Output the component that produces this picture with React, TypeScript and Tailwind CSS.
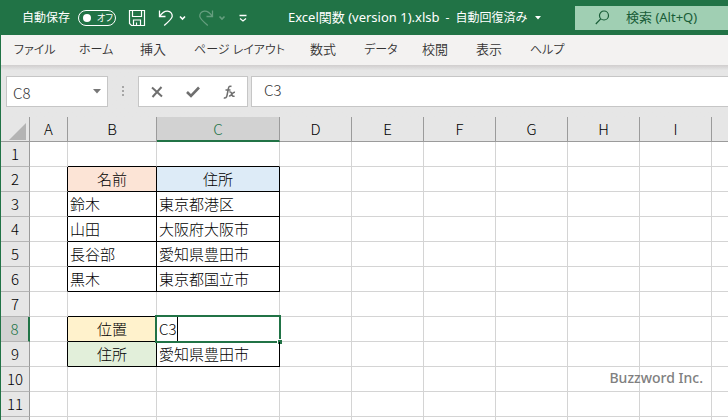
import React from "react";

const columns = ["A", "B", "C", "D", "E", "F", "G", "H", "I", ""];

const menus = [
  { label: "ファイル", style: "w-[65px] text-xs" },
  { label: "ホーム", style: "w-[61px] text-xs" },
  { label: "挿入", style: "w-[54px] text-[13px]" },
  { label: "ページ レイアウト", style: "w-[116px] text-xs" },
  { label: "数式", style: "w-[54px] text-[13px]" },
  { label: "データ", style: "w-[58px] text-xs" },
  { label: "校閲", style: "w-[54px] text-[13px]" },
  { label: "表示", style: "w-[54px] text-[13px]" },
  { label: "ヘルプ", style: "w-[54px] text-xs" },
];

type Row = { b?: string; c?: string; center?: boolean; bBg?: string; cBg?: string };

const rows: Row[] = [
  {},
  { b: "名前", c: "住所", center: true, bBg: "bg-[#fce4d6]", cBg: "bg-[#ddebf7]" },
  { b: "鈴木", c: "東京都港区" },
  { b: "山田", c: "大阪府大阪市" },
  { b: "長谷部", c: "愛知県豊田市" },
  { b: "黒木", c: "東京都国立市" },
  {},
  { b: "位置", c: "C3", bBg: "bg-[#fff2cc]" },
  { b: "住所", c: "愛知県豊田市", bBg: "bg-[#e2efda]" },
  {},
  {},
];

const ACTIVE_ROW = 7;

function TitleBar() {
  return (
    <header className="flex h-[35px] items-center bg-[#217346] pl-[21px] text-xs text-white">
      <label htmlFor="autosave" className="whitespace-nowrap">
        自動保存
      </label>
      <button
        id="autosave"
        role="switch"
        aria-checked="false"
        className="ml-2 flex h-4 w-[38px] shrink-0 items-center gap-1.5 rounded-full border border-white pl-1 text-[9px] leading-none whitespace-nowrap [font-feature-settings:'palt']"
      >
        <span className="size-2 shrink-0 rounded-full bg-white" />
        オフ
      </button>
      <button aria-label="上書き保存" className="ml-3 shrink-0">
        <svg width="18" height="18" viewBox="0 0 18 18" fill="none" stroke="white" strokeWidth="1.2">
          <path d="M1.500 1.500h15v15h-13l-2-2zM4.500 1.500v6h9v-6M5.500 16.500v-5.500h7v5.500M8.500 16v-2.500" />
        </svg>
      </button>
      <button aria-label="元に戻す" className="ml-3 shrink-0">
        <svg width="28" height="18" viewBox="0 0 28 18" fill="none" stroke="white" strokeWidth="1.3">
          <path d="M1.500 1.500v6h6M1.800 7.200C4 4 6.500 2 9.500 2.200c3.200.2 5 2.500 4.700 5.300-.2 2.200-2 3.800-8 9" />
          <path d="M22 7.500l2.500 2.500 2.500-2.500" strokeWidth="1.6" />
        </svg>
      </button>
      <button aria-label="やり直し" disabled className="ml-3 shrink-0 opacity-30">
        <svg width="28" height="18" viewBox="0 0 28 18" fill="none" stroke="white" strokeWidth="1.3">
          <path d="M14.500 1.500v6h-6M14.200 7.200C12 4 9.500 2 6.500 2.200c-3.200.2-5 2.500-4.700 5.300.2 2.200 2 3.800 8 9" />
          <path d="M21.500 7.500l2.500 2.500 2.500-2.500" strokeWidth="1.6" />
        </svg>
      </button>
      <button aria-label="クイック アクセスのユーザー設定" className="ml-3 shrink-0">
        <svg width="10" height="10" viewBox="0 0 10 10" fill="none" stroke="white" strokeWidth="1.3">
          <path d="M1.500 2.500h7M2 5.500l3 2.500 3-2.500" />
        </svg>
      </button>
      <h1 className="ml-10 flex items-baseline gap-1.5 whitespace-nowrap">
        <span className="text-[13px]">Excel関数 (version 1).xlsb</span>
        <span>-</span>
        <button className="flex items-center gap-2">
          自動回復済み
          <svg width="6" height="4" viewBox="0 0 6 4" fill="white">
            <path d="M0 0h6L3 3.500z" />
          </svg>
        </button>
      </h1>
      <label className="ml-auto flex h-6 w-[153px] shrink-0 items-center bg-[#a0cfb3] pl-5 text-[#185c37]">
        <svg width="15" height="15" viewBox="0 0 15 15" fill="none" stroke="currentColor" strokeWidth="1.200">
          <circle cx="9" cy="5.500" r="4.500" />
          <path d="M5.700 8.800L.8 14" />
        </svg>
        <input
          aria-label="検索"
          placeholder="検索 (Alt+Q)"
          className="ml-4 w-24 bg-transparent text-[13px] outline-none placeholder:text-[#185c37]"
        />
      </label>
    </header>
  );
}

function FormulaBar() {
  return (
    <div className="flex h-[52px] items-start bg-[#e6e6e6] bg-linear-to-b from-[#d0cece] to-[#e6e6e6] to-10% pt-[11px] pl-[5px] text-[15px] font-light text-[#333]">
      <div className="flex h-[31px] w-[102px] shrink-0 items-center border border-[#c6c6c6] bg-white px-1.5">
        <input aria-label="名前ボックス" defaultValue="C8" className="w-full min-w-0 pt-1 outline-none" />
        <svg width="8" height="5" viewBox="0 0 8 5" className="shrink-0" fill="#777">
          <path d="M0 0h8L4 4.500z" />
        </svg>
      </div>
      <svg width="30" height="31" viewBox="0 0 30 31" className="shrink-0" fill="#a6a6a6">
        <path d="M14 10h2v2h-2zM14 14h2v2h-2zM14 18h2v2h-2z" />
      </svg>
      <div className="flex h-[31px] w-[110px] shrink-0 items-center justify-around border border-[#c6c6c6] bg-white text-[#6f6f6f]">
        <button aria-label="キャンセル">
          <svg width="12" height="12" viewBox="0 0 12 12" fill="none" stroke="currentColor" strokeWidth="2">
            <path d="M1 1.500l10 9M10.500 1L1.500 11" />
          </svg>
        </button>
        <button aria-label="入力">
          <svg width="14" height="12" viewBox="0 0 14 12" fill="none" stroke="currentColor" strokeWidth="2.600">
            <path d="M1 6l4 4 8-8.500" />
          </svg>
        </button>
        <button aria-label="関数の挿入">
          <svg width="13" height="14" viewBox="0 0 13 14" fill="none" stroke="currentColor" strokeWidth="1.500">
            <path d="M8.500 1.500C6.800.6 5.800 1.400 5.400 3.500L4 10.500C3.600 12.500 2.500 13.400.8 12.700M2.500 5h5" />
            <path d="M6.300 7.200c1.600-.8 2 .3 2.500 2 .5 1.800 1.200 2.700 2.700 1.700M12 7.200c-1.500-.3-2.300.8-3.200 2-.9 1.300-1.500 2-2.900 1.700" />
          </svg>
        </button>
      </div>
      <input
        aria-label="数式バー"
        defaultValue="C3"
        className="ml-[3px] h-[31px] min-w-0 flex-1 border border-r-0 border-[#c6c6c6] bg-white pb-1 pl-3 outline-none"
      />
    </div>
  );
}

function Sheet() {
  return (
    <table className="w-full table-fixed border-separate border-spacing-0 text-[15px] leading-6 font-light text-black">
      <colgroup>
        <col className="w-[29px]" />
        <col className="w-[38px]" />
        <col className="w-[89px]" />
        <col className="w-[123px]" />
        <col className="w-[72px]" />
        <col className="w-[72px]" />
        <col className="w-[72px]" />
        <col className="w-[72px]" />
        <col className="w-[72px]" />
        <col className="w-[72px]" />
        <col />
      </colgroup>
      <thead>
        <tr className="h-[25px]">
          <th className="border-r border-b border-[#9b9b9b] bg-[#e6e6e6] p-0">
            <svg width="17" height="17" viewBox="0 0 17 17" className="mt-1 ml-2" fill="#b4b4b4">
              <path d="M17 0v17H0z" />
            </svg>
          </th>
          {columns.map((name) => (
            <th
              key={name}
              scope="col"
              className={
                name === "C"
                  ? "border-r border-b-2 border-r-[#9b9b9b] border-b-[#217346] bg-[#d2d2d2] p-0 leading-[23px] font-light text-[#217346]"
                  : "border-r border-b border-[#9b9b9b] bg-[#e6e6e6] p-0 font-light last:border-r-0"
              }
            >
              {name}
            </th>
          ))}
        </tr>
      </thead>
      <tbody>
        {rows.map((row, i) => {
          const filled = row.b !== undefined;
          const nextFilled = rows[i + 1]?.b !== undefined;
          const bottom = filled || nextFilled ? "border-b-black" : "border-b-[#d4d4d4]";
          const active = i === ACTIVE_ROW;
          return (
            <tr key={i} className="h-[25px]">
              <th
                scope="row"
                className={
                  active
                    ? "border-r-2 border-b border-r-[#217346] border-b-[#b5b5b5] bg-[#d2d2d2] p-0 font-light text-[#217346]"
                    : "border-r border-b border-r-[#9b9b9b] border-b-[#b5b5b5] bg-[#e6e6e6] p-0 font-light"
                }
              >
                {i + 1}
              </th>
              <td className={`border-r border-b border-b-[#d4d4d4] p-0 ${filled ? "border-r-black" : "border-r-[#d4d4d4]"}`} />
              <td
                className={`border-r border-b p-0 px-0.5 ${bottom} ${filled ? "border-r-black" : "border-r-[#d4d4d4]"} ${
                  row.bBg ? `text-center ${row.bBg}` : ""
                }`}
              >
                {row.b}
              </td>
              <td
                className={`relative border-r border-b p-0 px-0.5 ${bottom} ${filled ? "border-r-black" : "border-r-[#d4d4d4]"} ${
                  row.center ? "text-center" : ""
                } ${row.cBg ?? ""}`}
              >
                {active ? (
                  <>
                    <input aria-label="セル C8" defaultValue={row.c} className="block h-6 w-full outline-none" />
                    <span className="pointer-events-none absolute -inset-0.5 border-2 border-[#217346]" />
                    <span className="absolute -right-[3px] -bottom-[3px] size-[5px] border-t border-l border-white bg-[#217346]" />
                    <span className="absolute top-0 left-5 h-6 w-px bg-black" />
                  </>
                ) : (
                  row.c
                )}
              </td>
              {columns.slice(3).map((name) => (
                <td key={name} className="border-r border-b border-[#d4d4d4] p-0 last:border-r-0" />
              ))}
            </tr>
          );
        })}
        <tr className="h-[25px]">
          <td className="border-r border-r-[#9b9b9b] bg-[#e6e6e6]" />
          {columns.map((name) => (
            <td key={name} className="border-r border-[#d4d4d4] last:border-r-0" />
          ))}
        </tr>
      </tbody>
    </table>
  );
}

export default function App() {
  return (
    <div className="relative h-screen overflow-hidden border-l border-[#217346] bg-white font-['Noto_Sans','Noto_Sans_CJK_JP',sans-serif]">
      <TitleBar />
      <nav className="flex h-[30px] items-center bg-[#f3f2f1] pl-[13px] font-[350] text-[#333] [font-feature-settings:'palt']">
        {menus.map((m) => (
          <button key={m.label} className={`shrink-0 text-left whitespace-nowrap ${m.style}`}>
            {m.label}
          </button>
        ))}
      </nav>
      <main className="font-['Noto_Sans_CJK_JP',sans-serif]">
        <FormulaBar />
        <Sheet />
      </main>
      <p className="absolute right-[25px] bottom-8 font-['Noto_Sans',sans-serif] text-sm leading-5 font-medium text-[#808080]">
        Buzzword Inc.
      </p>
    </div>
  );
}
